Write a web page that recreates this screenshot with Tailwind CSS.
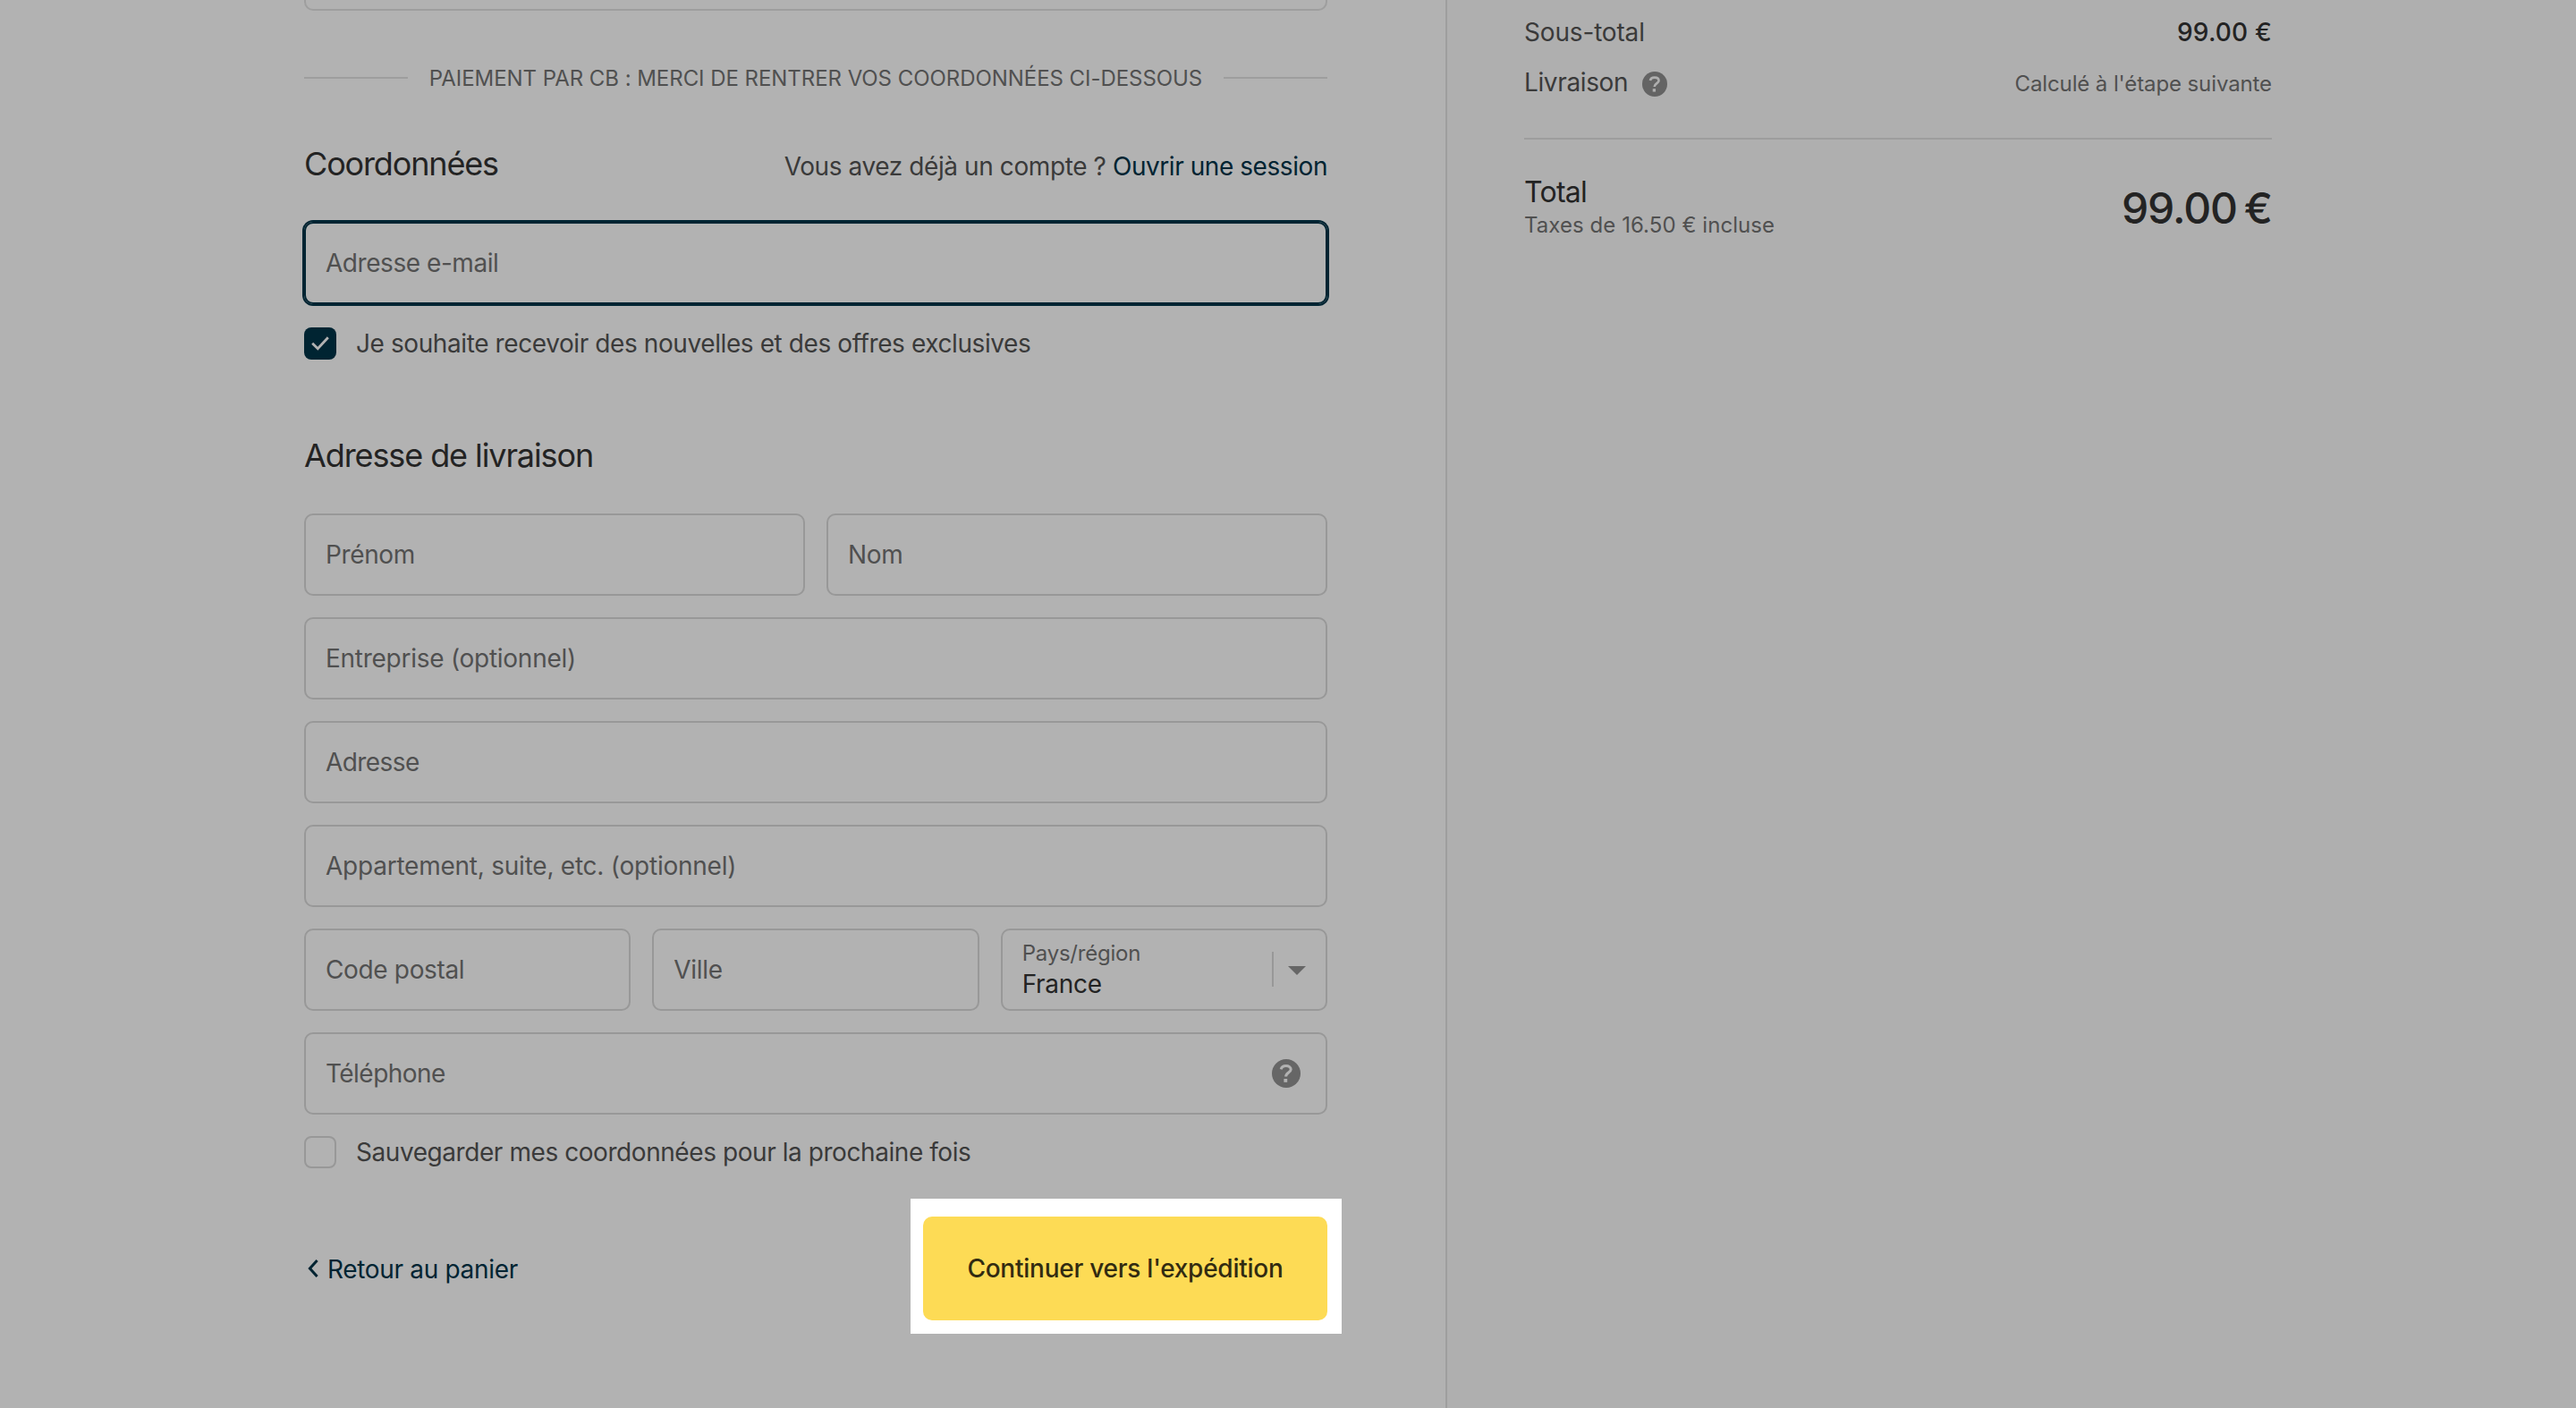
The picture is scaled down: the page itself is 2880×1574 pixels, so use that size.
<!DOCTYPE html>
<html lang="fr">
  <head>
    <meta charset="UTF-8" />
    <meta name="viewport" content="width=device-width, initial-scale=1.0" />
    <title>Paiement - Coordonnées</title>
    <script src="https://cdn.jsdelivr.net/npm/@tailwindcss/browser@4"></script>
  </head>
  <body
    class="flex h-[1574px] w-[2880px] overflow-hidden bg-[#b2b2b2] font-['Inter',sans-serif] text-[28px] text-[#3a3a3a]"
  >
    <!-- Formulaire -->
    <main class="w-[1616px] pl-[340px]">
      <div class="w-[1144px]">
        <div class="h-3 rounded-b-[10px] border-2 border-t-0 border-[#9e9e9e]"></div>

        <div class="mt-[57px] flex items-center gap-6">
          <div class="h-0.5 flex-1 bg-[#9e9e9e]"></div>
          <p class="h-9 text-2xl leading-[38px] tracking-[-0.0022em] whitespace-nowrap text-[#505050]">
            PAIEMENT PAR CB : MERCI DE RENTRER VOS COORDONNÉES CI-DESSOUS
          </p>
          <div class="h-0.5 flex-1 bg-[#9e9e9e]"></div>
        </div>

        <div class="mt-14 flex items-baseline justify-between">
          <h2 class="text-4xl leading-[44px] tracking-[-0.032em] text-[#232323]">Coordonnées</h2>
          <p class="leading-8 tracking-[-0.0145em]">
            Vous avez déjà un compte ?
            <a href="#" class="tracking-[-0.0156em] text-[#002432]">Ouvrir une session</a>
          </p>
        </div>

        <div
          class="mt-[43px] flex h-[92px] items-center rounded-[10px] border-2 border-[#002432] px-[22px] tracking-[-0.016em] text-[#505050] ring-2 ring-[#002432]"
        >
          <label>Adresse e-mail</label>
        </div>

        <div class="mt-[26px] flex h-9 items-center">
          <span class="flex size-9 items-center justify-center rounded-lg bg-[#002432]">
            <svg class="size-5" viewBox="0 0 20 20" fill="none" stroke="#b2b2b2" stroke-width="2.8">
              <path d="M1.2 9.7 7.3 15.7 18.8 3.2" />
            </svg>
          </span>
          <label class="pl-[22px] tracking-[-0.0145em]">Je souhaite recevoir des nouvelles et des offres exclusives</label>
        </div>

        <h2 class="mt-[85px] text-4xl leading-[44px] tracking-[-0.0305em] text-[#232323]">Adresse de livraison</h2>

        <div class="mt-[43px] grid grid-cols-6 gap-6 text-[#505050]">
          <div class="col-span-3 flex h-[92px] items-center rounded-[10px] border-2 border-[#989898] px-[22px]">
            <label class="tracking-[-0.013em]">Prénom</label>
          </div>
          <div class="col-span-3 flex h-[92px] items-center rounded-[10px] border-2 border-[#989898] px-[22px]">
            <label class="tracking-[-0.013em]">Nom</label>
          </div>
          <div class="col-span-6 flex h-[92px] items-center rounded-[10px] border-2 border-[#989898] px-[22px]">
            <label class="tracking-[-0.0095em]">Entreprise (optionnel)</label>
          </div>
          <div class="col-span-6 flex h-[92px] items-center rounded-[10px] border-2 border-[#989898] px-[22px]">
            <label class="tracking-[-0.02em]">Adresse</label>
          </div>
          <div class="col-span-6 flex h-[92px] items-center rounded-[10px] border-2 border-[#989898] px-[22px]">
            <label class="tracking-[-0.0084em]">Appartement, suite, etc. (optionnel)</label>
          </div>
          <div class="col-span-2 flex h-[92px] items-center rounded-[10px] border-2 border-[#989898] px-[22px]">
            <label class="tracking-[-0.0125em]">Code postal</label>
          </div>
          <div class="col-span-2 flex h-[92px] items-center rounded-[10px] border-2 border-[#989898] px-[22px]">
            <label class="tracking-[-0.01em]">Ville</label>
          </div>
          <div class="col-span-2 flex h-[92px] items-start rounded-[10px] border-2 border-[#989898] pl-[22px]">
            <div class="flex flex-1 flex-col pt-[11px]">
              <label class="text-2xl leading-[30px] tracking-[-0.0095em]">Pays/région</label>
              <span class="leading-[38px] tracking-[-0.01em] text-[#232323]">France</span>
            </div>
            <div class="mt-6 mr-[22px] flex h-[39px] items-center border-l-2 border-[#989898] pl-4">
              <svg class="mt-[3px] h-2.5 w-5" viewBox="0 0 20 10" fill="#666666">
                <path d="M0 0h20L10 10z" />
              </svg>
            </div>
          </div>
          <div
            class="col-span-6 flex h-[92px] items-center justify-between rounded-[10px] border-2 border-[#989898] pr-7 pl-[22px]"
          >
            <label class="tracking-[-0.0194em]">Téléphone</label>
            <svg class="size-8" viewBox="0 0 16 16">
              <circle cx="8" cy="8" r="8" fill="#666666" />
              <path
                d="M5.1 5.7C5.4 4.4 6.5 3.8 7.9 3.8c1.6 0 2.7.8 2.7 2 0 1.7-2.8 1.7-2.8 3.9"
                fill="none"
                stroke="#b2b2b2"
                stroke-width="1.5"
              />
              <path d="M6.7 11h1.9v1.9H6.7z" fill="#b2b2b2" />
            </svg>
          </div>
        </div>

        <div class="mt-6 flex h-9 items-center">
          <span class="size-9 rounded-lg border-2 border-[#989898]"></span>
          <label class="pl-[22px] tracking-[-0.0155em]">Sauvegarder mes coordonnées pour la prochaine fois</label>
        </div>

        <div class="mt-[34px] -mr-4 flex items-center justify-between">
          <a href="#" class="flex items-center pt-[5px] pl-1 tracking-[-0.0115em] text-[#002432]">
            <svg class="h-5 w-3" viewBox="0 0 12 20" fill="none" stroke="currentColor" stroke-width="3">
              <path d="M10.6 1 2.4 10l8.2 9" />
            </svg>
            <span class="pt-0.5 pl-2.5">Retour au panier</span>
          </a>
          <!-- Bouton mis en avant -->
          <div class="bg-white pt-5 pr-4 pb-[15px] pl-3.5">
            <button
              class="h-[116px] w-[452px] rounded-[10px] bg-[#fddb55] font-medium tracking-[-0.009em] text-[#322b11]"
            >
              Continuer vers l'expédition
            </button>
          </div>
        </div>
      </div>
    </main>

    <!-- Récapitulatif -->
    <aside class="flex-1 border-l-2 border-[#9e9e9e] bg-[#afafaf] pt-4 pl-[86px]">
      <div class="w-[836px]">
        <div class="flex items-baseline justify-between leading-10">
          <span class="tracking-[-0.006em]">Sous-total</span>
          <span class="font-medium tracking-[0.0067em] text-[#232323]">99.00 €</span>
        </div>
        <div class="mt-4 flex items-baseline justify-between leading-10">
          <span class="flex items-center tracking-[-0.0132em]">
            Livraison
            <svg class="mt-1 ml-4 size-7" viewBox="0 0 16 16">
              <circle cx="8" cy="8" r="8" fill="#646464" />
              <path
                d="M5.1 5.7C5.4 4.4 6.5 3.8 7.9 3.8c1.6 0 2.7.8 2.7 2 0 1.7-2.8 1.7-2.8 3.9"
                fill="none"
                stroke="#afafaf"
                stroke-width="1.5"
              />
              <path d="M6.7 11h1.9v1.9H6.7z" fill="#afafaf" />
            </svg>
          </span>
          <span class="text-2xl leading-8 tracking-[-0.0045em] text-[#505050]">Calculé à l'étape suivante</span>
        </div>

        <div class="mt-[42px] flex items-center justify-between border-t-2 border-[#9d9d9d] pt-[39px]">
          <div class="flex flex-col">
            <span class="text-[32px] leading-10 tracking-[-0.0229em] text-[#232323]">Total</span>
            <span class="text-2xl leading-[34px] tracking-[0.0025em] text-[#505050]">Taxes de 16.50 € incluse</span>
          </div>
          <span class="pt-px text-5xl font-medium tracking-[-0.022em] [word-spacing:-4px] text-[#232323]">99.00 €</span>
        </div>
      </div>
    </aside>
  </body>
</html>
